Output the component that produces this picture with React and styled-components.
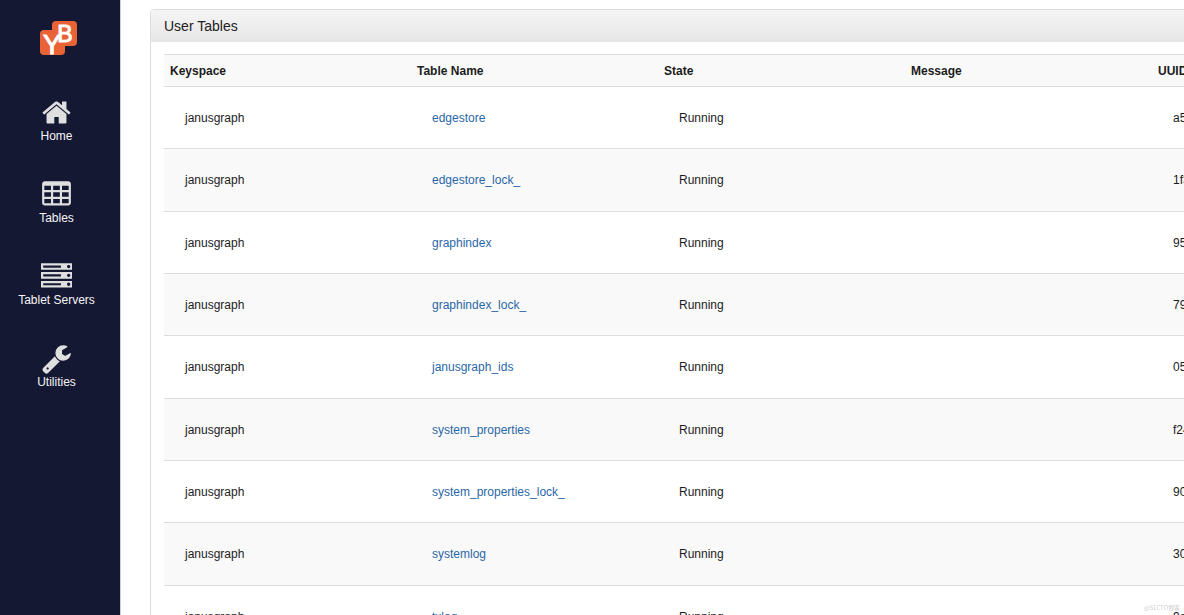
import React from "react";
import styled, { createGlobalStyle } from "styled-components";

const GlobalStyle = createGlobalStyle`
  *, *::before, *::after { box-sizing: border-box; }
  body {
    margin: 0;
    background: #fff;
    color: #1c1c1c;
    font-family: "Liberation Sans", Helvetica, Arial, sans-serif;
    font-size: 12px;
    line-height: 16px;
  }
`;

const Page = styled.div`
  display: flex;
  height: 100vh;
  overflow: hidden;
`;

const Sidebar = styled.nav`
  flex: 0 0 121px;
  display: flex;
  flex-direction: column;
  align-items: center;
  gap: 35px;
  padding: 21px 7px 0 0;
  background: #141833;
  border-right: 1px solid #cfcfd8;
`;

const LogoLink = styled.a`
  display: block;
  height: 41px;
  padding-left: 4px;
`;

const NavLink = styled.a`
  display: flex;
  flex-direction: column;
  align-items: center;
  color: #f4f4f4;
  text-decoration: none;
`;

const NavIcon = styled.svg`
  display: block;
  width: 31px;
  height: 31px;
  fill: #dfdfdf;
`;

const Main = styled.main`
  flex: 1;
  min-width: 0;
  overflow: hidden;
  padding: 9px 29px;
`;

const Panel = styled.section`
  min-width: 1263px;
  border: 1px solid #ddd;
  border-radius: 4px;
`;

const PanelTitle = styled.h2`
  margin: 0;
  padding: 8px 13px;
  font-size: 14px;
  font-weight: 400;
  line-height: 16px;
  color: #222;
  background: linear-gradient(#f5f5f5, #e6e6e6);
  border-radius: 3px 3px 0 0;
`;

const PanelBody = styled.div`
  padding: 12px 13px;
`;

const Table = styled.table`
  width: 100%;
  table-layout: fixed;
  border-spacing: 0;
`;

const HeadCell = styled.th`
  height: 32px;
  padding: 0 6px;
  border-top: 1px solid #ddd;
  background: #f9f9f9;
  text-align: left;
  white-space: nowrap;
`;

const Row = styled.tr`
  height: 62px;
  background: ${(p) => (p.$striped ? "#f9f9f9" : "#fff")};

  &:nth-child(3n + 2) {
    height: 63px;
  }
`;

const Cell = styled.td`
  padding: 0 21px;
  border-top: 1px solid #ddd;
  white-space: nowrap;
`;

const TableLink = styled.a`
  color: #2a67a8;
  text-decoration: none;
`;

const Watermark = styled.small`
  position: fixed;
  right: 4px;
  bottom: 3px;
  color: #ccc;
  font-family: "Noto Sans CJK SC", sans-serif;
  font-size: 6px;
  line-height: 8px;
`;

const LogoLetter = styled.text`
  fill: #fff;
  stroke: #fff;
  stroke-width: 1;
  font-family: "Liberation Sans Narrow", "Liberation Sans", sans-serif;
  font-size: 27px;
  text-anchor: middle;
`;

const LogoCapital = styled(LogoLetter)`
  font-family: "Liberation Sans", sans-serif;
  font-size: 23px;
`;

const Logo = () => (
  <svg width="37" height="34" viewBox="0 0 37 34" aria-label="YB" role="img">
    <rect x="0" y="9" width="25" height="25" rx="4" fill="#e96336" />
    <rect x="12" y="0" width="25" height="25" rx="4" fill="#e96336" />
    <LogoLetter x="12" y="33">Y</LogoLetter>
    <LogoCapital x="25" y="21">B</LogoCapital>
  </svg>
);

const navItems = [
  {
    label: "Home",
    path: "M1472 992v480q0 26-19 45t-45 19h-384v-384h-256v384h-384q-26 0-45-19t-19-45v-480q0-1 .5-3t.5-3l575-474 575 474q1 2 1 6zm223-69l-62 74q-8 9-21 11h-3q-13 0-21-7l-692-577-692 577q-12 8-24 7-13-2-21-11l-62-74q-8-10-7-23.5t11-21.5l719-599q32-26 76-26t76 26l244 204v-195q0-14 9-23t23-9h192q14 0 23 9t9 23v408l219 182q10 8 11 21.5t-7 23.5z",
  },
  {
    label: "Tables",
    path: "M224 128h1344q66 0 113 47t47 113v1088q0 66-47 113t-113 47h-1344q-66 0-113-47t-47-113v-1088q0-66 47-113t113-47zM192 384v256h384v-256zM704 384v256h384v-256zM1216 384v256h384v-256zM192 768v256h384v-256zM704 768v256h384v-256zM1216 768v256h384v-256zM192 1152v256h384v-256zM704 1152v256h384v-256zM1216 1152v256h384v-256z",
  },
  {
    label: "Tablet Servers",
    path: "M128 1408h1024v-128h-1024v128zm0-512h1024v-128h-1024v128zm1568 448q0-40-28-68t-68-28-68 28-28 68 28 68 68 28 68-28 28-68zm-1568-960h1024v-128h-1024v128zm1568 448q0-40-28-68t-68-28-68 28-28 68 28 68 68 28 68-28 28-68zm0-512q0-40-28-68t-68-28-68 28-28 68 28 68 68 28 68-28 28-68zm96 832v384h-1792v-384h1792zm0-512v384h-1792v-384h1792zm0-512v384h-1792v-384h1792z",
  },
  {
    label: "Utilities",
    path: "M448 1472q0-26-19-45t-45-19-45 19-19 45 19 45 45 19 45-19 19-45zm644-420l-682 682q-37 37-90 37-52 0-91-37l-106-108q-38-36-38-90 0-53 37-91l681-681q39 98 114.5 173.5t173.5 114.5zm634-435q0 39-23 106-47 134-164.5 217.5t-258.5 83.5q-185 0-316.5-131.5t-131.5-316.5 131.5-316.5 316.5-131.5q58 0 121.5 16.5t107.5 46.5q16 11 16 28t-16 28l-293 169v224l193 107q5-3 79-48.5t135.5-81 70.5-35.5q15 0 23.5 10t8.5 25z",
  },
];

const columns = ["Keyspace", "Table Name", "State", "Message", "UUID"];

const tables = [
  ["edgestore", "a5"],
  ["edgestore_lock_", "1f3"],
  ["graphindex", "95"],
  ["graphindex_lock_", "79"],
  ["janusgraph_ids", "05"],
  ["system_properties", "f24"],
  ["system_properties_lock_", "90"],
  ["systemlog", "30"],
  ["txlog", "9a"],
];

export default function App() {
  return (
    <>
      <GlobalStyle />
      <Page>
        <Sidebar>
          <LogoLink href="#">
            <Logo />
          </LogoLink>
          {navItems.map((item) => (
            <NavLink key={item.label} href="#">
              <NavIcon viewBox="0 0 1792 1792" aria-hidden="true">
                <path fillRule="evenodd" d={item.path} />
              </NavIcon>
              {item.label}
            </NavLink>
          ))}
        </Sidebar>
        <Main>
          <Panel>
            <PanelTitle>User Tables</PanelTitle>
            <PanelBody>
              <Table>
                <thead>
                  <tr>
                    {columns.map((name) => (
                      <HeadCell key={name} scope="col">
                        {name}
                      </HeadCell>
                    ))}
                  </tr>
                </thead>
                <tbody>
                  {tables.map(([name, uuid], i) => (
                    <Row key={name} $striped={i % 2 === 1}>
                      <Cell>janusgraph</Cell>
                      <Cell>
                        <TableLink href="#">{name}</TableLink>
                      </Cell>
                      <Cell>Running</Cell>
                      <Cell />
                      <Cell>{uuid}</Cell>
                    </Row>
                  ))}
                </tbody>
              </Table>
            </PanelBody>
          </Panel>
        </Main>
      </Page>
      <Watermark>@51CTO博客</Watermark>
    </>
  );
}
